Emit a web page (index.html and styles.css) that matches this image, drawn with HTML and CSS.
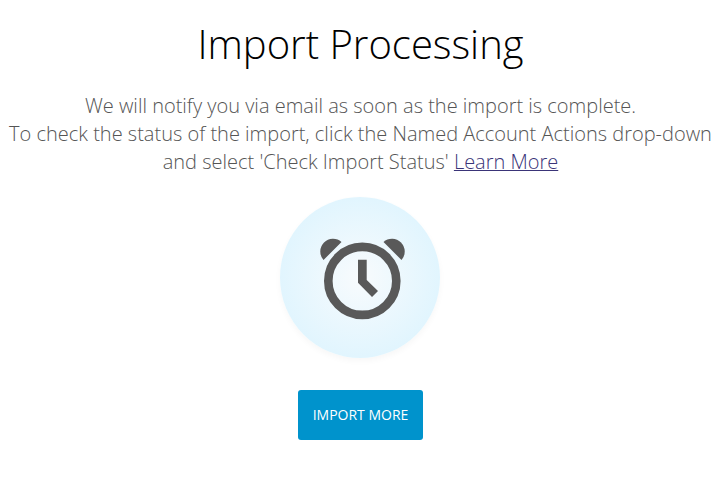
FILE: index.html
```html
<!DOCTYPE html>
<html lang="en">
<head>
<meta charset="utf-8">
<title>Import Processing</title>
<link rel="stylesheet" href="styles.css">
</head>
<body>
<main class="panel">
  <h1 class="title">Import Processing</h1>
  <p class="message">We will notify you via email as soon as the import is complete.<br>To check the status of the import, click the Named Account Actions drop-down<br>and select 'Check Import Status' <a class="link" href="#">Learn More</a></p>
  <div class="badge">
    <svg class="clock" viewBox="0 0 160 160" fill="#595959" aria-hidden="true">
      <circle cx="82.300" cy="83.900" r="34" fill="none" stroke="#595959" stroke-width="8.600"/>
      <path d="M78 62.700h8.700v20.300l11.300 11-6 6-14-14.300z"/>
      <path d="M43.500 63A12.750 12.750 0 0 1 61.500 45z"/>
      <path d="M121.500 63A12.750 12.750 0 0 0 103.500 45z"/>
    </svg>
  </div>
  <button class="button">IMPORT MORE</button>
</main>
</body>
</html>
```
FILE: styles.css
```css
body {
  margin: 0;
  background: #fff;
  font-family: "Open Sans", sans-serif;
}
.panel {
  width: 721px;
  display: flex;
  flex-direction: column;
  align-items: center;
}
.title {
  margin: 16px 0 0;
  font-size: 40px;
  font-weight: 300;
  line-height: 56px;
  color: #000;
}
.message {
  margin: 20px 0 0;
  font-size: 20px;
  font-weight: 300;
  line-height: 28px;
  text-align: center;
  white-space: nowrap;
  color: #555;
}
.link {
  color: #3a3478;
  text-decoration-thickness: 1px;
}
.badge {
  width: 160px;
  height: 161px;
  margin: 21px 1px 0 0;
  border-radius: 50%;
  background: radial-gradient(circle closest-side, #f8fbfd, #e1f5fe);
  box-shadow: 0 3px 6px rgba(0, 0, 0, 0.035);
}
.clock {
  display: block;
  width: 160px;
  height: 160px;
}
.button {
  width: 125px;
  height: 50px;
  margin-top: 32px;
  padding: 0 0 2px;
  border: 0;
  border-radius: 3px;
  background: #0093cc;
  color: #fff;
  font-family: inherit;
  font-size: 14px;
}
```
